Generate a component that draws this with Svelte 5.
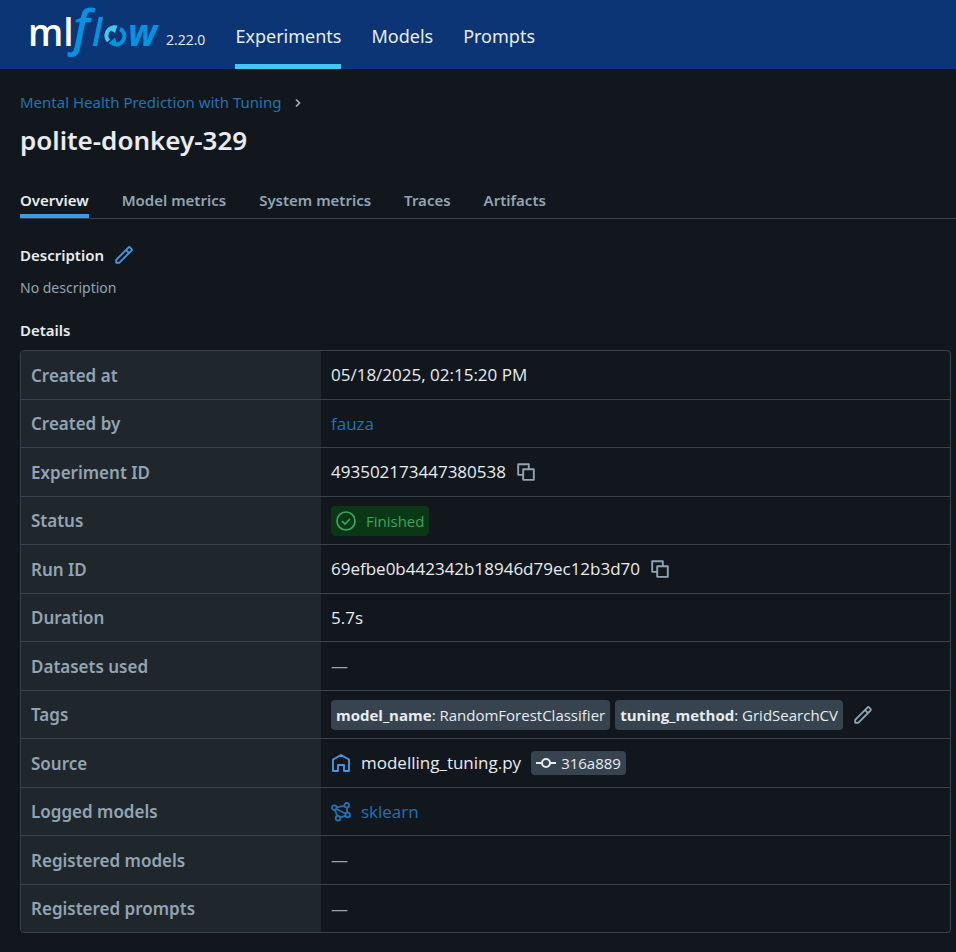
<script>
  const nav = ['Experiments', 'Models', 'Prompts'];
  const tabs = ['Overview', 'Model metrics', 'System metrics', 'Traces', 'Artifacts'];
  const tags = [
    ['model_name', 'RandomForestClassifier'],
    ['tuning_method', 'GridSearchCV']
  ];
  const rows = [
    ['Created at', 'text', '05/18/2025, 02:15:20 PM'],
    ['Created by', 'link', 'fauza'],
    ['Experiment ID', 'copy', '493502173447380538'],
    ['Status', 'status', 'Finished'],
    ['Run ID', 'copy', '69efbe0b442342b18946d79ec12b3d70'],
    ['Duration', 'text', '5.7s'],
    ['Datasets used', 'empty', '—'],
    ['Tags', 'tags', ''],
    ['Source', 'source', 'modelling_tuning.py'],
    ['Logged models', 'model', 'sklearn'],
    ['Registered models', 'empty', '—'],
    ['Registered prompts', 'empty', '—']
  ];
  let active = $state('Overview');
</script>

{#snippet pencil()}
  <svg class="icon" viewBox="0 0 16 16" aria-hidden="true">
    <path fill="currentColor" fill-rule="evenodd" d="M13.49 1.51a1.75 1.75 0 0 0-2.48 0L1.22 11.31a.75.75 0 0 0-.22.53v2.41c0 .41.34.75.75.75h2.41a.75.75 0 0 0 .53-.22l9.8-9.79a1.75 1.75 0 0 0 0-2.48zm-1.42 1.06a.25.25 0 0 1 .36 0l1 1a.25.25 0 0 1 0 .36l-1.43 1.43-1.36-1.36zM9.58 5.06 2.5 12.15v1.35h1.35l7.09-7.08z" />
  </svg>
{/snippet}

<header>
  <a class="logo" href="#home" aria-label="mlflow">
    <svg width="134" height="69" viewBox="0 0 134 69" aria-hidden="true">
      <text x="0" y="46">ml</text>
      <text class="f" x="45" y="45">f</text>
      <text class="l" x="64" y="46">l</text>
      <g fill="none" stroke-width="4">
        <path stroke="#43c9ed" d="M80.500 41A8.200 8.200 0 0 1 86 27.400" />
        <path stroke="#0194e2" d="M92 28.900A8.200 8.200 0 0 1 84.500 43.500" />
      </g>
      <path fill="#43c9ed" d="M85 25.200l4.500 .300-2.500 7.500-4-2.500z" />
      <path fill="#0194e2" d="M80.500 43.500l6.500-6 1.500 5-3 3z" />
      <text class="w" x="100" y="46">w</text>
    </svg>
  </a>
  <span class="version">2.22.0</span>
  <nav aria-label="Main">
    {#each nav as item, i}
      <a href="#{item.toLowerCase()}" class:current={i === 0}>{item}</a>
    {/each}
  </nav>
</header>

<main>
  <div class="crumbs">
    <a href="#experiment">Mental Health Prediction with Tuning</a>
    <svg width="10" height="16" viewBox="0 0 10 16" aria-hidden="true"><path d="M3 5.500l3.500 3.500L3 12.500" fill="none" stroke="#a9b5c0" stroke-width="1.600" /></svg>
  </div>
  <h1>polite-donkey-329</h1>

  <div class="tabs" role="tablist">
    {#each tabs as tab}
      <button role="tab" aria-selected={active === tab} onclick={() => (active = tab)}>{tab}</button>
    {/each}
  </div>

  <section>
    <div class="heading">
      <h2>Description</h2>
      <button class="plain blue" aria-label="Edit description">{@render pencil()}</button>
    </div>
    <p>No description</p>
    <h2 class="details">Details</h2>

    <div class="frame">
      <table>
        <tbody>
          {#each rows as [label, kind, value]}
            <tr>
              <th scope="row">{label}</th>
              <td>
                <div class="cell">
                  {#if kind === 'link'}
                    <a href="#user">{value}</a>
                  {:else if kind === 'copy'}
                    <span>{value}</span>
                    <button class="plain" aria-label="Copy {label}">
                      <svg class="icon" viewBox="0 0 16 16" aria-hidden="true">
                        <path fill="currentColor" fill-rule="evenodd" d="M1.750 1a.75.75 0 0 0-.75.75v8.500c0 .41.34.75.75.75H5v3.250c0 .41.34.75.75.75h8.500a.75.75 0 0 0 .75-.75v-8.500a.75.75 0 0 0-.75-.75H11V1.750a.75.75 0 0 0-.75-.75zM9.500 5V2.500h-7v7H5V5.750A.75.75 0 0 1 5.750 5zm-3 8.500v-7h7v7z" />
                      </svg>
                    </button>
                  {:else if kind === 'status'}
                    <span class="status">
                      <svg class="icon" viewBox="0 0 20 20" fill="none" stroke="currentColor" stroke-width="1.700" aria-hidden="true">
                        <circle cx="10" cy="10" r="9" /><path d="M6 10l3 3 5-5" />
                      </svg>
                      {value}
                    </span>
                  {:else if kind === 'empty'}
                    <span class="muted">{value}</span>
                  {:else if kind === 'tags'}
                    <div class="tags">
                      {#each tags as [key, val]}
                        <span class="tag"><strong>{key}</strong>: {val}</span>
                      {/each}
                    </div>
                    <button class="plain" aria-label="Edit tags">{@render pencil()}</button>
                  {:else if kind === 'source'}
                    <svg class="icon bright" viewBox="0 0 20 20" fill="none" stroke="currentColor" stroke-width="1.900" stroke-linejoin="round" aria-hidden="true">
                      <path d="M2 6.500L10 2l8 4.500V18h-5v-6H7v6H2z" />
                    </svg>
                    <span>{value}</span>
                    <span class="commit">
                      <svg class="icon" viewBox="0 0 20 20" fill="none" stroke="currentColor" stroke-width="2" aria-hidden="true">
                        <circle cx="10" cy="10" r="4" /><path d="M0 10h6M14 10h6" />
                      </svg>
                      316a889
                    </span>
                  {:else if kind === 'model'}
                    <svg class="icon link" viewBox="0 0 20 20" fill="none" stroke="currentColor" stroke-width="1.800" aria-hidden="true">
                      <circle cx="3.300" cy="5.700" r="2.300" /><circle cx="15.700" cy="3.300" r="2.300" />
                      <circle cx="16.700" cy="13" r="2.300" /><circle cx="7" cy="16.300" r="2.300" />
                      <path d="M5.600 5.300l7.800-1.500M5.300 7l9.500 4.800M4 8l2.200 6M15.900 5.600l.5 5M9.200 15.600l5.300-1.900" />
                    </svg>
                    <a href="#sklearn">{value}</a>
                  {:else}
                    <span>{value}</span>
                  {/if}
                </div>
              </td>
            </tr>
          {/each}
        </tbody>
      </table>
    </div>
  </section>
</main>

<style>
  :global(body) {
    margin: 0;
    background: #11171d;
    color: #e8ecf0;
    font-family: 'Noto Sans', 'Open Sans', sans-serif;
    font-size: 15px;
  }
  a { color: #2272b4; text-decoration: none; }
  button { font: inherit; border: 0; padding: 0; background: none; cursor: pointer; }
  h1, h2, p { margin: 0; }
  svg { display: block; flex: none; }
  .icon { width: 20px; height: 20px; }

  header {
    display: flex;
    height: 69px;
    box-sizing: border-box;
    padding-left: 28px;
    background: #0b3574;
  }
  .logo svg { overflow: visible; }
  .logo text { font-family: 'Open Sans', sans-serif; font-size: 37px; font-weight: 600; fill: #fff; }
  .logo .f, .logo .l, .logo .w { fill: #0194e2; font-style: italic; }
  .logo .f { font-size: 49px; }
  .logo .w { font-weight: 700; }
  .version {
    padding: 30px 30px 0 4px;
    font-family: 'Open Sans', sans-serif;
    font-size: 14px;
    line-height: 20px;
  }
  nav { display: flex; gap: 30px; }
  nav a {
    box-sizing: border-box;
    padding-top: 22px;
    border-bottom: 5px solid transparent;
    color: #e8ecf0;
    font-size: 18px;
    line-height: 28px;
  }
  nav a.current { border-color: #43c9ed; }

  main { padding: 21px 0 0 20px; }
  .crumbs { display: flex; align-items: center; gap: 12px; line-height: 24px; }
  h1 { font-size: 26px; font-weight: 600; line-height: 36px; padding-top: 8px; }
  .tabs {
    display: flex;
    gap: 33px;
    margin-top: 28px;
    border-bottom: 1px solid #37444f;
  }
  .tabs button {
    height: 32px;
    padding-bottom: 4px;
    box-sizing: border-box;
    color: #92a4b3;
    font-weight: 600;
    line-height: 24px;
  }
  .tabs button[aria-selected='true'] { color: #e8ecf0; box-shadow: inset 0 -4px #4299e0; }

  section { padding-right: 5px; }
  .heading { display: flex; align-items: center; gap: 10px; margin-top: 24px; }
  h2 { font-size: 15px; font-weight: 600; line-height: 24px; }
  .plain { color: #92a4b3; }
  .plain.blue, .bright { color: #4299e0; }
  .link { color: #2272b4; }
  p { color: #92a4b3; line-height: 24px; margin-top: 9px; font-size: 14px; }
  .details { margin: 18px 0 8px; }

  .frame { border: 1px solid #37444f; border-radius: 4px; overflow: hidden; }
  table { width: 100%; border-spacing: 0; table-layout: fixed; font-size: 17px; }
  th, td { box-sizing: border-box; height: 48px; padding: 0 10px; border-bottom: 1px solid #37444f; }
  td { font-family: 'Open Sans', sans-serif; }
  tr:nth-child(odd) > * { height: 49px; }
  tr:last-child > * { height: 47px; border-bottom: 0; }
  th { width: 300px; background: #1f272d; color: #92a4b3; font-weight: 600; text-align: left; }
  .cell { display: flex; align-items: center; gap: 10px; line-height: 24px; }
  .muted { color: #92a4b3; }
  .status {
    display: flex;
    gap: 10px;
    padding: 5px;
    border-radius: 4px;
    background: #0a3716;
    color: #3ba65e;
    font-size: 15px;
    line-height: 20px;
  }
  .tags { display: flex; gap: 5px; }
  .tag { padding: 3px 5px; border-radius: 4px; background: #37444f; font-size: 15px; white-space: nowrap; }
  .tag strong { font-weight: 700; }
  .commit {
    display: flex;
    align-items: center;
    gap: 5px;
    padding: 0 5px;
    border-radius: 4px;
    background: #37444f;
    font-size: 15px;
  }
</style>
